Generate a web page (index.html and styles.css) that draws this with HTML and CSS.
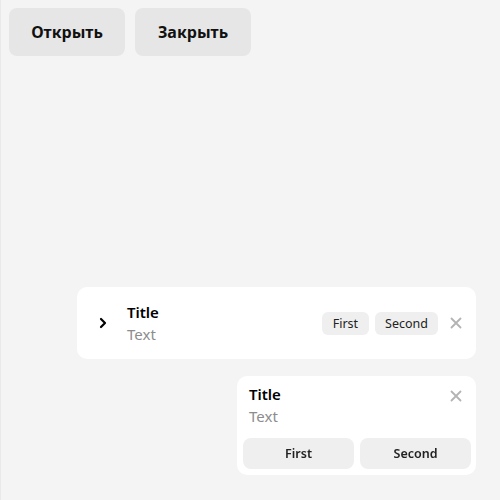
FILE: index.html
```html
<!DOCTYPE html>
<html lang="ru">
<head>
<meta charset="utf-8">
<link rel="stylesheet" href="styles.css">
</head>
<body>
<div class="page">
  <div class="actions">
    <button class="btn">Открыть</button>
    <button class="btn">Закрыть</button>
  </div>
</div>
<div class="toaster">
  <div class="toast toast-wide">
    <span class="chev">
      <svg width="10" height="12" viewBox="0 0 10 12"><path d="M3 2 L7 6 L3 10" fill="none" stroke="#000" stroke-width="2.2" stroke-linecap="round" stroke-linejoin="round"/></svg>
    </span>
    <div class="content">
      <div class="title">Title</div>
      <div class="text">Text</div>
    </div>
    <div class="chips">
      <span class="chip chip-first">First</span>
      <span class="chip">Second</span>
    </div>
    <span class="close">
      <svg width="12" height="12" viewBox="0 0 12 12"><path d="M1.5 1.5 L10.5 10.5 M10.5 1.5 L1.5 10.5" stroke="#b3b3b3" stroke-width="1.8" stroke-linecap="round"/></svg>
    </span>
  </div>
  <div class="toast toast-small">
    <div class="head">
      <div class="content">
        <div class="title">Title</div>
        <div class="text">Text</div>
      </div>
      <span class="close">
        <svg width="12" height="12" viewBox="0 0 12 12"><path d="M1.5 1.5 L10.5 10.5 M10.5 1.5 L1.5 10.5" stroke="#b3b3b3" stroke-width="1.8" stroke-linecap="round"/></svg>
      </span>
    </div>
    <div class="foot">
      <button class="fbtn">First</button>
      <button class="fbtn">Second</button>
    </div>
  </div>
</div>
</body>
</html>
```
FILE: styles.css
```css
html, body {
  margin: 0;
  height: 100%;
}
body {
  background: #f4f4f4;
  border-left: 1px solid #e9e9e9;
  box-sizing: border-box;
  font-family: "Noto Sans", "DejaVu Sans", sans-serif;
  color: #000;
}
.page {
  padding: 8px 8px;
}
.actions {
  display: flex;
  gap: 10px;
}
.btn {
  font-family: inherit;
  font-size: 16px;
  font-weight: 700;
  color: #111;
  background: #e6e6e6;
  border: none;
  border-radius: 8px;
  height: 48px;
  width: 116px;
  padding: 0;
}
.toaster {
  position: fixed;
  right: 24px;
  bottom: 25px;
  display: flex;
  flex-direction: column;
  align-items: flex-end;
  gap: 17px;
}
.toast {
  background: #fff;
  border-radius: 10px;
  box-sizing: border-box;
}
.toast-wide {
  width: 399px;
  height: 72px;
  display: flex;
  align-items: center;
  padding: 0 14px 0 21px;
}
.chev {
  width: 10px;
  display: flex;
  margin-right: 19px;
}
.content {
  flex: 1;
  display: flex;
  flex-direction: column;
}
.title {
  font-size: 15px;
  font-weight: 600;
  line-height: 20px;
}
.text {
  font-size: 15px;
  color: #8c8c8c;
  line-height: 20px;
  margin-top: 2px;
}
.chips {
  display: flex;
  gap: 6px;
  margin-right: 12px;
}
.chip {
  background: #efefef;
  border-radius: 6px;
  height: 23px;
  padding: 0 10px;
  display: flex;
  align-items: center;
  font-size: 12.5px;
  color: #222;
}
.chip-first {
  padding: 0 11px;
}
.close {
  display: flex;
}
.toast-small {
  width: 239px;
  padding: 8px 5px 6px 6px;
}
.head {
  display: flex;
  align-items: flex-start;
  padding: 0 9px 0 6px;
}
.head .close {
  margin-top: 6px;
}
.foot {
  display: flex;
  gap: 6px;
  margin-top: 12px;
}
.fbtn {
  flex: 1;
  height: 31px;
  border: none;
  border-radius: 8px;
  background: #efefef;
  font-family: inherit;
  font-size: 12.5px;
  font-weight: 600;
  color: #222;
  padding: 0;
}
```
